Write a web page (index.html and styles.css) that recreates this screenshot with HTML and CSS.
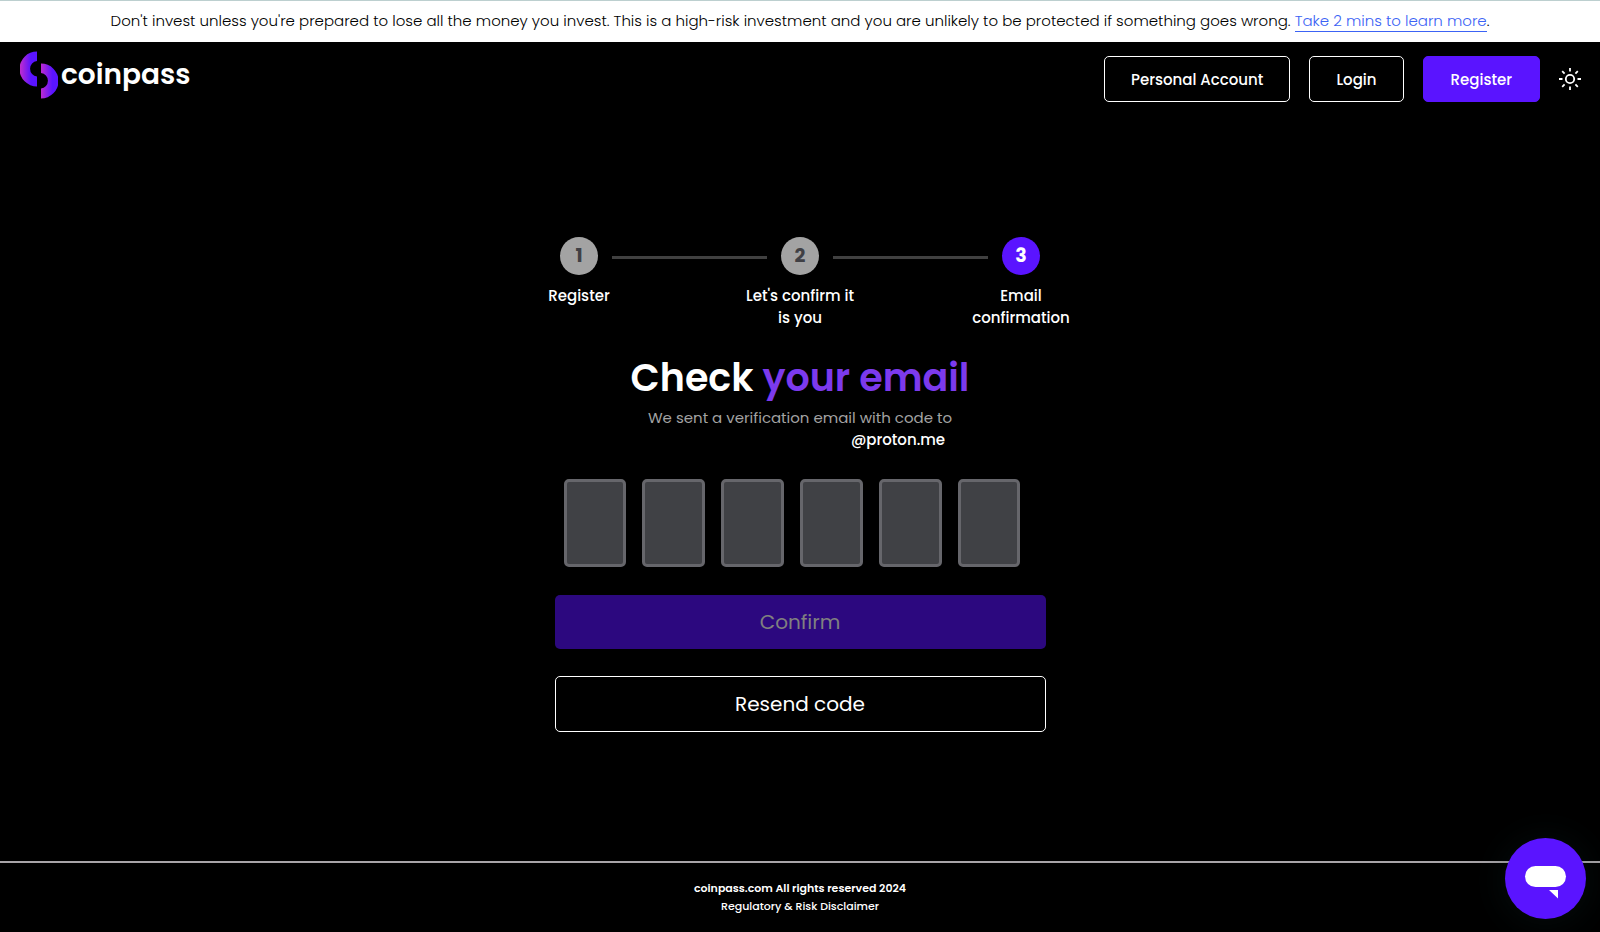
FILE: index.html
```html
<!DOCTYPE html>
<html lang="en">
<head>
<meta charset="utf-8">
<meta name="viewport" content="width=device-width, initial-scale=1">
<title>coinpass - Check your email</title>
<link rel="stylesheet" href="styles.css">
</head>
<body>
<p class="risk">Don't invest unless you're prepared to lose all the money you invest. This is a high-risk investment and you are unlikely to be protected if something goes wrong. <a class="risk-link" href="#">Take 2 mins to learn more</a>.</p>
<header class="header">
  <a class="brand" href="#">
    <svg class="brand-mark" viewBox="0 0 38 48" aria-hidden="true">
      <defs>
        <linearGradient id="left" x1="0" x2="1"><stop offset="0.05" stop-color="#bd2bd0"/><stop offset="0.65" stop-color="#5a14ff"/></linearGradient>
        <linearGradient id="right" x1="0" x2="1"><stop offset="0" stop-color="#bd2bd0"/><stop offset="0.65" stop-color="#5a14ff"/></linearGradient>
      </defs>
      <path fill="url(#left)" d="M17 0.500A17.500 17.500 0 0 0 17 35.500V25.500A7.800 7.800 0 0 1 17 10Z"/>
      <path fill="url(#right)" d="M21 12.500A17.500 17.500 0 0 1 21 47.500V37.500A7.800 7.800 0 0 0 21 22Z"/>
    </svg>
    <span class="brand-name">coinpass</span>
  </a>
  <nav class="nav">
    <button class="btn" type="button">Personal Account</button>
    <button class="btn" type="button">Login</button>
    <button class="btn btn-primary" type="button">Register</button>
    <button class="theme" type="button" aria-label="Toggle theme">
      <svg viewBox="0 0 22 22" width="22" height="22" fill="none" stroke="#fff" stroke-width="1.800" aria-hidden="true">
        <circle cx="11" cy="11" r="4.200"/>
        <path d="M11 0v3.500M11 18.500V22M0 11h3.500M18.500 11H22M3.200 3.200l2.400 2.400M16.400 16.400l2.400 2.400M3.200 18.800l2.400-2.400M16.400 5.600l2.400-2.400"/>
      </svg>
    </button>
  </nav>
</header>
<main class="main">
  <ol class="steps">
    <li class="step"><span class="step-number">1</span><span class="step-label">Register</span></li>
    <li class="step-line" aria-hidden="true"></li>
    <li class="step"><span class="step-number">2</span><span class="step-label">Let's confirm it is you</span></li>
    <li class="step-line" aria-hidden="true"></li>
    <li class="step step-active" aria-current="step"><span class="step-number">3</span><span class="step-label">Email confirmation</span></li>
  </ol>
  <h1 class="title">Check <span class="title-accent">your email</span></h1>
  <p class="sent">We sent a verification email with code to</p>
  <p class="address">@proton.me</p>
  <form class="form">
    <div class="code">
      <input class="digit" type="text" inputmode="numeric" maxlength="1" aria-label="Digit 1">
      <input class="digit" type="text" inputmode="numeric" maxlength="1" aria-label="Digit 2">
      <input class="digit" type="text" inputmode="numeric" maxlength="1" aria-label="Digit 3">
      <input class="digit" type="text" inputmode="numeric" maxlength="1" aria-label="Digit 4">
      <input class="digit" type="text" inputmode="numeric" maxlength="1" aria-label="Digit 5">
      <input class="digit" type="text" inputmode="numeric" maxlength="1" aria-label="Digit 6">
    </div>
    <button class="confirm" type="submit" disabled>Confirm</button>
    <button class="resend" type="button">Resend code</button>
  </form>
</main>
<footer class="footer">
  <p class="copyright">coinpass.com All rights reserved 2024</p>
  <a class="footer-link" href="#">Regulatory &amp; Risk Disclaimer</a>
</footer>
<button class="chat" type="button" aria-label="Open chat">
  <svg viewBox="0 0 81 81" width="81" height="81" fill="#fff" aria-hidden="true">
    <rect x="20" y="28" width="41" height="21" rx="10.500"/>
    <path d="M44 52h9v8.500z"/>
  </svg>
</button>
</body>
</html>
```
FILE: styles.css
```css
* { box-sizing: border-box; }
body {
  margin: 0;
  min-height: 100vh;
  display: flex;
  flex-direction: column;
  background: #000;
  color: #fff;
  font-family: Poppins, Inter, "Open Sans", sans-serif;
  font-size: 15px;
  line-height: 22px;
}
button, input { font-family: inherit; }
button { cursor: pointer; }
a { color: inherit; text-decoration: none; }
p, h1 { margin: 0; }

.risk {
  padding: 9px 16px 10px;
  border-top: 1px solid #bccfcf;
  background: #fff;
  color: #000;
  font-weight: 300;
  text-align: center;
}
.risk-link { color: #3c63f5; border-bottom: 1px solid #3c63f5; }

.header {
  display: flex;
  justify-content: space-between;
  align-items: flex-start;
  padding: 9px 16px 9px 20px;
}
.brand { display: flex; gap: 3px; }
.brand-mark { width: 38px; height: 48px; }
.brand-name { font-size: 28px; line-height: 48px; font-weight: 600; }
.nav { display: flex; align-items: center; gap: 19px; padding-top: 5px; }
.btn {
  height: 46px;
  padding: 0 26px;
  border: 1px solid #fff;
  border-radius: 5px;
  background: #000;
  color: #fff;
  font-size: 15px;
  font-weight: 500;
}
.btn-primary { padding: 0 27px; border-color: #5a14ff; background: #5a14ff; }
.theme { display: flex; padding: 0 3px 0 0; border: 0; background: none; }

.main {
  flex: 1;
  display: flex;
  flex-direction: column;
  align-items: center;
  padding: 126px 16px 32px;
}
.steps {
  display: flex;
  margin: 0;
  padding: 0;
  list-style: none;
}
.step {
  width: 38px;
  display: flex;
  flex-direction: column;
  align-items: center;
  gap: 10px;
}
.step-number {
  width: 38px;
  height: 38px;
  border-radius: 50%;
  background: #a3a3a3;
  color: #404045;
  font-size: 19px;
  line-height: 37px;
  font-weight: 700;
  text-align: center;
}
.step-active .step-number { background: #5a14ff; color: #fff; }
.step-label { width: 112px; font-weight: 500; text-align: center; }
.step-line { width: 155px; height: 3px; margin: 19px 14px 0; background: #404040; }

.title { margin-top: 23px; font-size: 38px; line-height: 52px; font-weight: 600; }
.title-accent { color: #7c3aed; }
.sent { margin-top: 3px; color: #a3a3a3; }
.address { padding-left: 196px; font-weight: 500; }

.form { width: 100%; max-width: 491px; display: flex; flex-direction: column; margin-top: 28px; }
.code {
  display: grid;
  grid-template-columns: repeat(6, 1fr);
  gap: 16px;
  margin: 0 25px 28px 9px;
}
.digit {
  width: 100%;
  height: 88px;
  padding: 0;
  border: 3px solid #66666b;
  border-radius: 5px;
  background: #404145;
  color: #fff;
  font-size: 30px;
  text-align: center;
}
.confirm, .resend { border-radius: 5px; font-size: 20px; }
.confirm { height: 54px; border: 0; background: #2c087f; color: #808080; cursor: default; }
.resend { height: 56px; margin-top: 27px; border: 1px solid #fff; background: #000; color: #fff; }

.footer {
  display: flex;
  flex-direction: column;
  align-items: center;
  padding: 16px 16px 17px;
  border-top: 2px solid #a8a4a8;
  font-size: 11px;
  line-height: 18px;
  font-weight: 500;
}
.copyright { font-weight: 600; }

.chat {
  position: fixed;
  right: 14px;
  bottom: 13px;
  width: 81px;
  height: 81px;
  padding: 0;
  border: 0;
  border-radius: 50%;
  background: #5a14ff;
  box-shadow: 0 2px 40px rgba(20, 50, 50, 0.3);
}
.chat svg { display: block; }
```
